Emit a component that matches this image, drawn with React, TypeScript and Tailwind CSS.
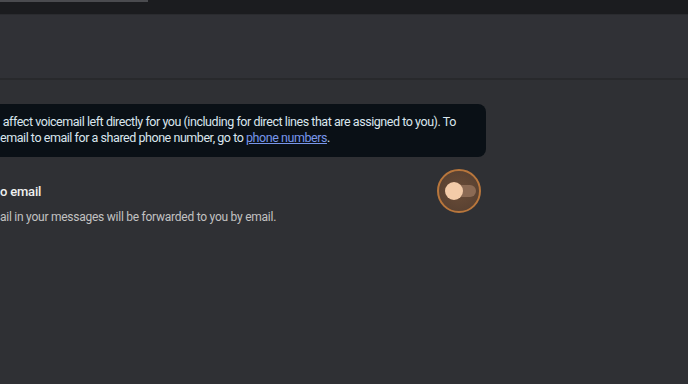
const Toggle: React.FC = () => {
    return (
        <div className="w-[44px] h-[44px] rounded-full border-2 border-[#b8763c] bg-[radial-gradient(circle,#6a4c37_0%,#5a4232_70%,#6b4a32_100%)] flex items-center justify-center shrink-0">
            <div className="relative w-[29px] h-[12px] rounded-full bg-[#8b6a54] ml-[5px]">
                <div className="absolute left-[-2px] top-[-3px] w-[18px] h-[18px] rounded-full bg-[#f3cba8]"></div>
            </div>
        </div>
    );
}

const App: React.FC = () => {
    return (
        <div className="h-[384px] w-full overflow-hidden bg-[#2f3034] font-['Roboto',sans-serif]">
            <div className="relative h-[14px] bg-[#1b1c1f]">
                <div className="absolute left-0 top-0 h-[2px] w-[148px] bg-[#4a4b4f]"></div>
            </div>
            <div className="h-[66px] bg-[#303136] border-t border-[#2a2b2f] border-b-2 border-b-[#28292c]"></div>
            <div className="pt-[24px]">
                <div className="w-[486px] h-[53px] rounded-r-lg bg-[#0a1016] pt-[10px] text-[12.5px] tracking-[-0.45px] leading-[16px] text-[#dae6ee] whitespace-nowrap">
                    <p>&nbsp;affect voicemail left directly for you (including for direct lines that are assigned to you). To</p>
                    <p>email to email for a shared phone number, go to <a href="#" className="text-[#7896ea] underline">phone numbers</a>.</p>
                </div>
                <div className="w-[486px] mt-[12px] flex justify-between pr-[5px]">
                    <div className="pt-[13px]">
                        <h3 className="text-[13px] tracking-[-0.2px] leading-[20px] font-medium text-[#f0f0f0]">o email</h3>
                        <p className="mt-[7px] text-[12px] tracking-[-0.25px] leading-[16px] text-[#c2c2c2]">ail in your messages will be forwarded to you by email.</p>
                    </div>
                    <Toggle />
                </div>
            </div>
        </div>
    );
}

export default App;
